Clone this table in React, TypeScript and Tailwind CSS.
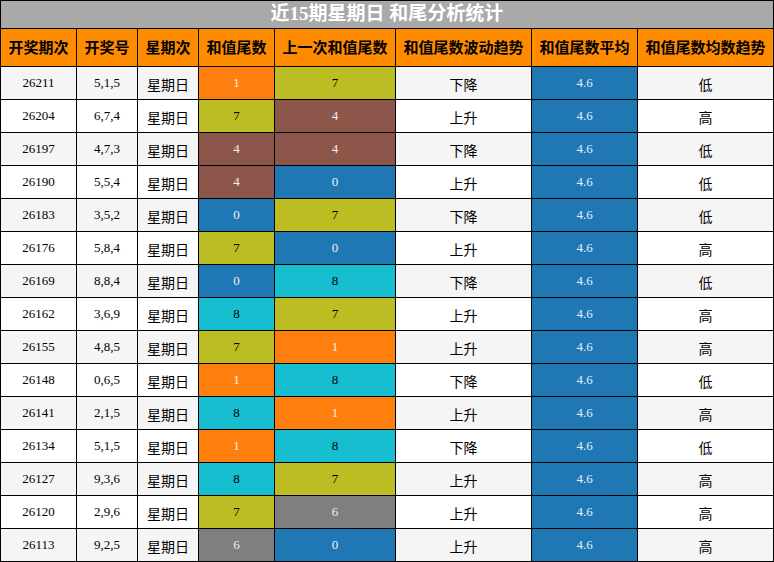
const rows: [string, string, number, number, string, string][] = [
  ["26211", "5,1,5", 1, 7, "下降", "低"],
  ["26204", "6,7,4", 7, 4, "上升", "高"],
  ["26197", "4,7,3", 4, 4, "下降", "低"],
  ["26190", "5,5,4", 4, 0, "上升", "低"],
  ["26183", "3,5,2", 0, 7, "下降", "低"],
  ["26176", "5,8,4", 7, 0, "上升", "高"],
  ["26169", "8,8,4", 0, 8, "下降", "低"],
  ["26162", "3,6,9", 8, 7, "上升", "高"],
  ["26155", "4,8,5", 7, 1, "上升", "高"],
  ["26148", "0,6,5", 1, 8, "下降", "低"],
  ["26141", "2,1,5", 8, 1, "上升", "高"],
  ["26134", "5,1,5", 1, 8, "下降", "低"],
  ["26127", "9,3,6", 8, 7, "上升", "高"],
  ["26120", "2,9,6", 7, 6, "上升", "高"],
  ["26113", "9,2,5", 6, 0, "上升", "高"],
];

const headers = [
  "开奖期次",
  "开奖号",
  "星期次",
  "和值尾数",
  "上一次和值尾数",
  "和值尾数波动趋势",
  "和值尾数平均",
  "和值尾数均数趋势",
];

// tab10-style swatch per tail digit
const digitCell: Record<number, string> = {
  0: "bg-[#1f77b4] text-[#f2f2f2]",
  1: "bg-[#ff7f0e] text-[#f2f2f2]",
  4: "bg-[#8c564b] text-[#f2f2f2]",
  6: "bg-[#7f7f7f] text-[#f2f2f2]",
  7: "bg-[#bcbd22] text-black",
  8: "bg-[#17becf] text-black",
};

const grid =
  "grid grid-cols-[76px_61px_61px_76px_121px_136px_106px_136px]";
const cell = "flex items-center justify-center border-r border-b border-black";
const num = "font-['Liberation_Serif','Noto_Sans_CJK_SC',serif] text-[13px]";
const cjk = "font-['Noto_Sans_CJK_SC',sans-serif] text-[14px] pt-[3px]";

export default function App() {
  return (
    <div className="w-[774px] h-[562px] bg-white border-l border-t border-black text-black">
      <div className="h-[28px] flex items-center justify-center bg-[#a9a9a9] border-r border-b border-black font-['Liberation_Serif','Noto_Sans_CJK_SC',sans-serif] text-[19px] font-bold text-white">
        近15期星期日 和尾分析统计
      </div>
      <div className={`${grid} h-[38px] bg-[#ff8c00]`}>
        {headers.map((h) => (
          <div
            key={h}
            className={`${cell} font-['Noto_Sans_CJK_SC',sans-serif] text-[15px] font-bold`}
          >
            {h}
          </div>
        ))}
      </div>
      {rows.map(([issue, nums, tail, prev, wave, trend], i) => {
        const bg = i % 2 === 0 ? "bg-[#f5f5f5]" : "bg-white";
        return (
          <div key={issue} className={`${grid} h-[33px]`}>
            <div className={`${cell} ${bg} ${num}`}>{issue}</div>
            <div className={`${cell} ${bg} ${num}`}>{nums}</div>
            <div className={`${cell} ${bg} ${cjk}`}>星期日</div>
            <div className={`${cell} ${digitCell[tail]} ${num}`}>{tail}</div>
            <div className={`${cell} ${digitCell[prev]} ${num}`}>{prev}</div>
            <div className={`${cell} ${bg} ${cjk}`}>{wave}</div>
            <div className={`${cell} bg-[#1f77b4] text-[#e8eef5] ${num}`}>4.6</div>
            <div className={`${cell} ${bg} ${cjk}`}>{trend}</div>
          </div>
        );
      })}
    </div>
  );
}
